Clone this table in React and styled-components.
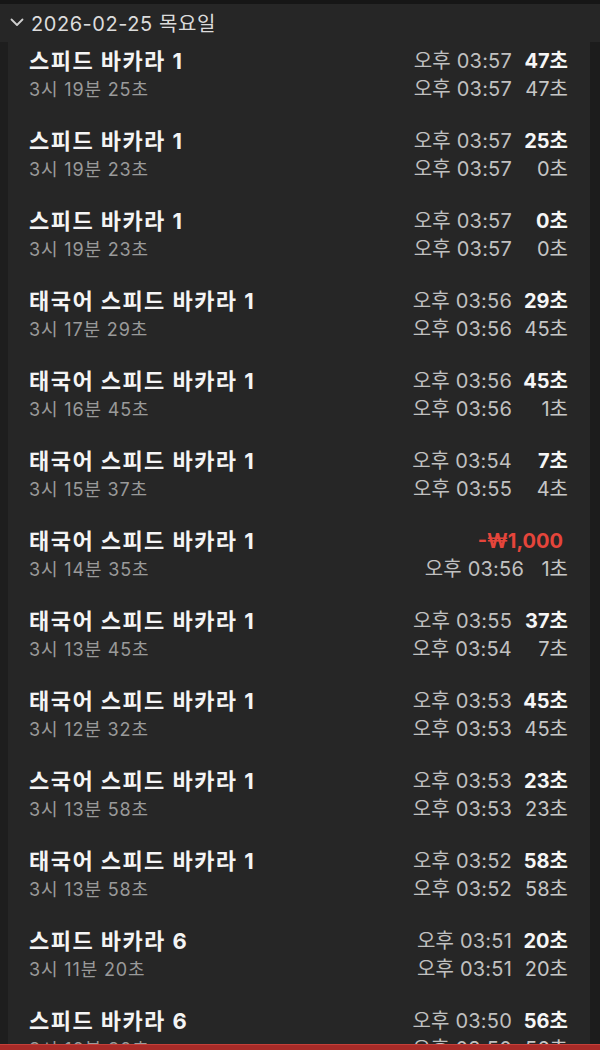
import React from "react";
import styled, { createGlobalStyle } from "styled-components";

const Global = createGlobalStyle`
  html, body { margin: 0; padding: 0; background: #1c1c1c; }
  body { font-family: "Inter", "Noto Sans CJK KR", sans-serif; -webkit-font-smoothing: antialiased; }
  * { box-sizing: border-box; }
`;

const Page = styled.div`
  width: 600px;
  height: 1050px;
  overflow: hidden;
  display: flex;
  flex-direction: column;
  background: #1d1d1d;
  position: relative;
`;

const TopEdge = styled.div`
  height: 4px;
  background: #161616;
  flex: none;
`;

const Header = styled.div`
  height: 38px;
  flex: none;
  background: #262626;
  display: flex;
  align-items: center;
  gap: 7px;
  padding: 0 0 2px 10px;
  color: #dcdcdc;
  font-size: 20px;
  letter-spacing: 0.55px;
  font-weight: 400;
`;

const Body = styled.div`
  flex: 1;
  display: flex;
  min-height: 0;
`;

const Side = styled.div`
  width: ${(p) => p.$w}px;
  flex: none;
  background: ${(p) => p.$bg};
`;

const List = styled.div`
  flex: 1;
  background: #262626;
  display: flex;
  flex-direction: column;
  padding-left: 21px;
  padding-right: 22px;
`;

const Row = styled.div`
  flex: none;
  height: 80px;
  padding-top: 6px;
  display: flex;
  justify-content: space-between;
`;

const Left = styled.div`
  display: flex;
  flex-direction: column;
`;

const Title = styled.div`
  height: 27px;
  line-height: 27px;
  font-size: 22px;
  letter-spacing: 1.45px;
  font-weight: 700;
  color: #f4f4f4;
  white-space: nowrap;
`;

const Sub = styled.div`
  height: 29px;
  line-height: 29px;
  font-size: 18px;
  letter-spacing: 0.85px;
  color: #9a9a9a;
  white-space: nowrap;
`;

const Right = styled.div`
  display: flex;
  flex-direction: column;
  align-items: flex-end;
`;

const Line = styled.div`
  height: ${(p) => (p.$first ? 27 : 29)}px;
  line-height: ${(p) => (p.$first ? 27 : 29)}px;
  display: flex;
  align-items: center;
  white-space: nowrap;
  font-size: 20px;
`;

const Time = styled.span`
  color: #c0c0c0;
  font-weight: 400;
  letter-spacing: 0.2px;
`;

const Secs = styled.span`
  display: inline-block;
  width: ${(p) => p.$w}px;
  text-align: right;
  color: ${(p) => (p.$bold ? "#f6f6f6" : "#c6c6c6")};
  font-weight: ${(p) => (p.$bold ? 700 : 400)};
`;

const Amount = styled.span`
  color: #e5453b;
  font-weight: 700;
  font-size: 20px;
  padding-right: 5px;
`;

const BottomBar = styled.div`
  position: absolute;
  left: 0;
  right: 0;
  bottom: 0;
  height: 6px;
  background: #a82b28;
  border-top: 1px solid #c6403a;
`;

const rows = [
  { t: "스피드 바카라 1", s: "3시 19분 25초", a: ["오후 03:57", "47초"], b: ["오후 03:57", "47초"] },
  { t: "스피드 바카라 1", s: "3시 19분 23초", a: ["오후 03:57", "25초"], b: ["오후 03:57", "0초"] },
  { t: "스피드 바카라 1", s: "3시 19분 23초", a: ["오후 03:57", "0초"], b: ["오후 03:57", "0초"] },
  { t: "태국어 스피드 바카라 1", s: "3시 17분 29초", a: ["오후 03:56", "29초"], b: ["오후 03:56", "45초"] },
  { t: "태국어 스피드 바카라 1", s: "3시 16분 45초", a: ["오후 03:56", "45초"], b: ["오후 03:56", "1초"] },
  { t: "태국어 스피드 바카라 1", s: "3시 15분 37초", a: ["오후 03:54", "7초"], b: ["오후 03:55", "4초"] },
  { t: "태국어 스피드 바카라 1", s: "3시 14분 35초", amount: "-₩1,000", b: ["오후 03:56", "1초"], narrow: true },
  { t: "태국어 스피드 바카라 1", s: "3시 13분 45초", a: ["오후 03:55", "37초"], b: ["오후 03:54", "7초"] },
  { t: "태국어 스피드 바카라 1", s: "3시 12분 32초", a: ["오후 03:53", "45초"], b: ["오후 03:53", "45초"] },
  { t: "스국어 스피드 바카라 1", s: "3시 13분 58초", a: ["오후 03:53", "23초"], b: ["오후 03:53", "23초"] },
  { t: "태국어 스피드 바카라 1", s: "3시 13분 58초", a: ["오후 03:52", "58초"], b: ["오후 03:52", "58초"] },
  { t: "스피드 바카라 6", s: "3시 11분 20초", a: ["오후 03:51", "20초"], b: ["오후 03:51", "20초"] },
  { t: "스피드 바카라 6", s: "3시 10분 30초", a: ["오후 03:50", "56초"], b: ["오후 03:50", "56초"] },
];

const Chevron = () => (
  <svg width="14" height="10" viewBox="0 0 14 10" fill="none">
    <path d="M1.5 2.5 L7 8 L12.5 2.5" stroke="#cfcfcf" strokeWidth="1.8" strokeLinecap="round" strokeLinejoin="round" />
  </svg>
);

export default function App() {
  return (
    <Page>
      <Global />
      <TopEdge />
      <Header>
        <Chevron />
        <span>2026-02-25 목요일</span>
      </Header>
      <Body>
        <Side $w={8} $bg="#1e1e1e" />
        <List>
          {rows.map((r, i) => (
            <Row key={i}>
              <Left>
                <Title>{r.t}</Title>
                <Sub>{r.s}</Sub>
              </Left>
              <Right>
                <Line $first>
                  {r.amount ? (
                    <Amount>{r.amount}</Amount>
                  ) : (
                    <>
                      <Time>{r.a[0]}</Time>
                      <Secs $w={56} $bold>{r.a[1]}</Secs>
                    </>
                  )}
                </Line>
                <Line>
                  <Time>{r.b[0]}</Time>
                  <Secs $w={r.narrow ? 44 : 56}>{r.b[1]}</Secs>
                </Line>
              </Right>
            </Row>
          ))}
        </List>
        <Side $w={10} $bg="#1c1c1c" />
      </Body>
      <BottomBar />
    </Page>
  );
}
